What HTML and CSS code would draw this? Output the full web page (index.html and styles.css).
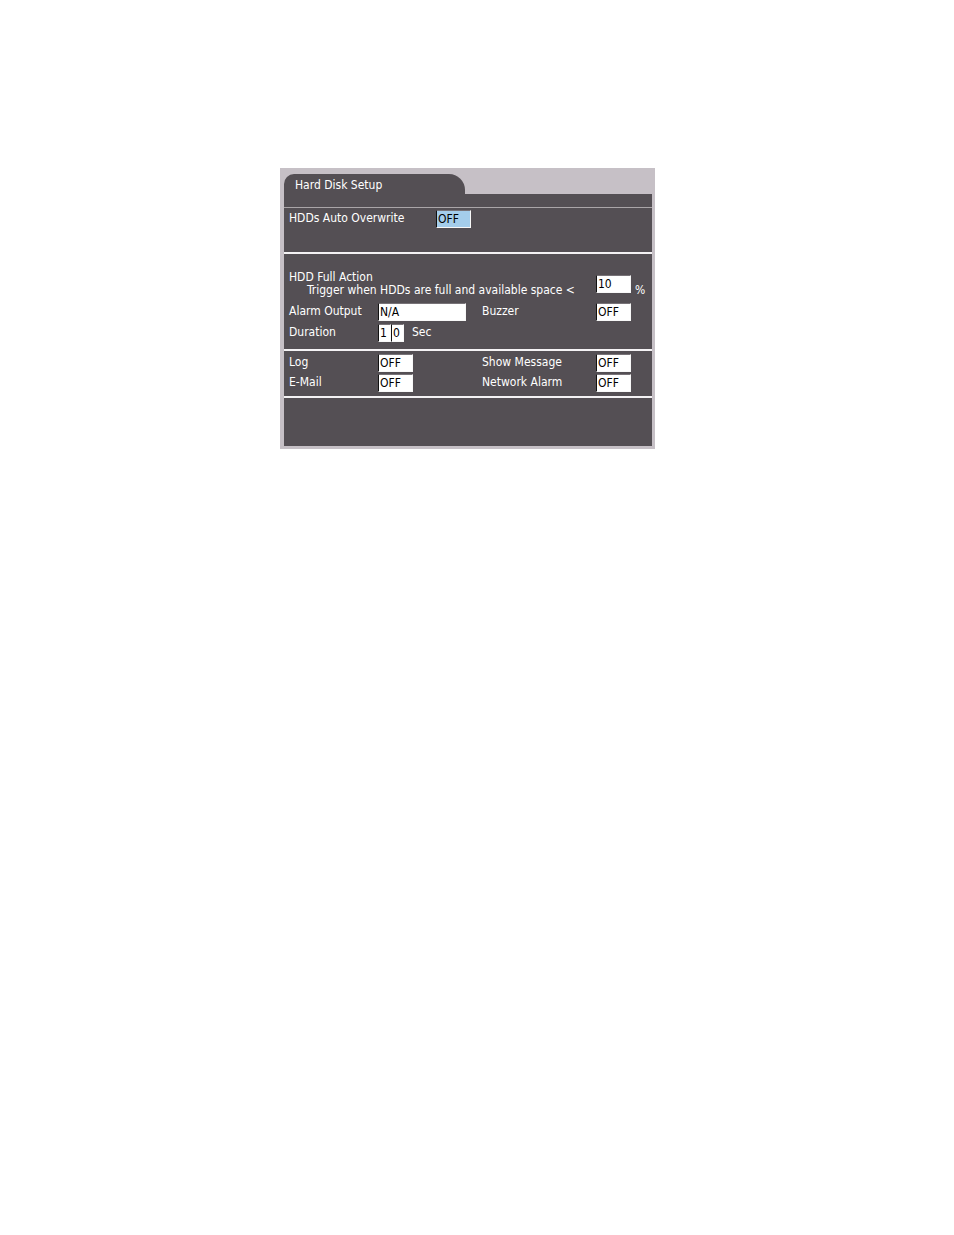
FILE: index.html
```html
<!DOCTYPE html>
<html lang="en">
<head>
<meta charset="utf-8">
<meta name="viewport" content="width=device-width, initial-scale=1">
<title>Hard Disk Setup</title>
<link rel="stylesheet" href="styles.css">
</head>
<body>
<main class="page">
  <form class="panel">
    <h1 class="tab">Hard Disk Setup</h1>
    <div class="body">
      <div class="strip"></div>
      <section class="section overwrite">
        <label for="overwrite">HDDs Auto Overwrite</label>
        <select id="overwrite" class="field selected"><option>OFF</option><option>ON</option></select>
      </section>
      <section class="section full-action">
        <div class="trigger">
          <div class="trigger-text">
            <h2 class="heading">HDD Full Action</h2>
            <label class="indent" for="space">Trigger when HDDs are full and available space &lt;</label>
          </div>
          <input id="space" class="field" type="text" value="10">
          <span class="percent">%</span>
        </div>
        <div class="grid">
          <label for="output">Alarm Output</label>
          <select id="output" class="field wide"><option>N/A</option></select>
          <label for="buzzer">Buzzer</label>
          <select id="buzzer" class="field"><option>OFF</option><option>ON</option></select>
          <label for="tens">Duration</label>
          <div class="duration">
            <input id="tens" class="field digit" type="text" value="1" maxlength="1">
            <input class="field digit" type="text" value="0" maxlength="1" aria-label="Duration, ones">
            <span class="unit">Sec</span>
          </div>
        </div>
      </section>
      <section class="section notify">
        <div class="grid">
          <label for="log">Log</label>
          <select id="log" class="field"><option>OFF</option><option>ON</option></select>
          <label for="message">Show Message</label>
          <select id="message" class="field"><option>OFF</option><option>ON</option></select>
          <label for="mail">E-Mail</label>
          <select id="mail" class="field"><option>OFF</option><option>ON</option></select>
          <label for="network">Network Alarm</label>
          <select id="network" class="field"><option>OFF</option><option>ON</option></select>
        </div>
      </section>
      <div class="footer"></div>
    </div>
  </form>
</main>
</body>
</html>
```
FILE: styles.css
```css
* {
  box-sizing: border-box;
}

body {
  margin: 0;
  background: #fff;
  color: #fff;
  font: 12px/18px "DejaVu Sans Condensed", Tahoma, sans-serif;
}

.page {
  padding: 168px 16px 16px 280px;
}

.panel {
  max-width: 375px;
  padding: 6px 3px 3px 4px;
  background: #c6c0c6;
}

.tab {
  width: 181px;
  height: 20px;
  margin: 0;
  padding: 2px 11px 0;
  border-radius: 10px 16px 0 0;
  background: #544f54;
  font-size: 12px;
  font-weight: 400;
}

.body {
  background: #544f54;
}

.strip {
  height: 14px;
  border-bottom: 1px solid #aaa5a8;
}

.section {
  border-bottom: 2px solid #f4f2f4;
}

.overwrite {
  display: grid;
  grid-template-columns: 147px 35px;
  padding: 2px 5px 24px;
}

.full-action {
  padding: 17px 5px 7px;
}

.trigger {
  display: grid;
  grid-template-columns: 307px 35px 1fr;
  padding-bottom: 6px;
}

.trigger-text {
  display: grid;
  line-height: 13px;
  white-space: nowrap;
}

.trigger > .field {
  align-self: center;
}

.heading {
  margin: 0;
  font-size: 12px;
  font-weight: 400;
  line-height: 13px;
}

.indent {
  padding-left: 18px;
}

.percent {
  align-self: end;
  padding-left: 4px;
  line-height: 14px;
}

.grid {
  display: grid;
  grid-template-columns: 89px 104px 114px 35px;
  row-gap: 2px;
}

.full-action .grid {
  row-gap: 3px;
}

.notify {
  padding: 3px 5px 4px;
}

.grid > label,
.overwrite > label {
  line-height: 16px;
}

.field {
  appearance: none;
  width: 35px;
  height: 18px;
  margin: 0;
  padding: 0 1px;
  border: 1px solid #f8f8f8;
  border-top-color: #777277;
  border-left-color: #111;
  border-radius: 0;
  background: #fff;
  color: #000;
  font: inherit;
  line-height: 16px;
}

.selected {
  background: #a4cdeb;
}

.wide {
  width: 88px;
}

.duration {
  display: flex;
}

.digit {
  width: 13px;
}

.unit {
  padding-left: 8px;
  line-height: 16px;
}

.footer {
  height: 48px;
}
```
